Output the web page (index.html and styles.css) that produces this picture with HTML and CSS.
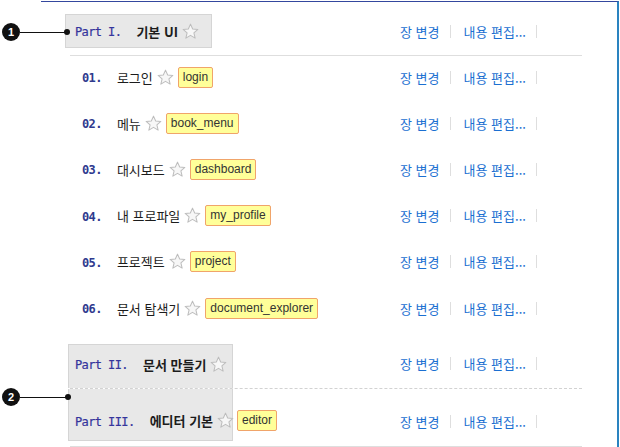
FILE: index.html
```html
<!DOCTYPE html>
<html lang="ko">
<head>
<meta charset="utf-8">
<link rel="stylesheet" href="styles.css">
</head>
<body>
<div class="callout c1"><span class="badge">1</span><span class="wire"></span><span class="dot"></span></div>
<div class="callout c2"><span class="badge">2</span><span class="wire"></span><span class="dot"></span></div>

<div class="panel">
  <div class="list">
    <div class="row part part1">
      <div class="title"><div class="cell sel1"><span class="pnum">Part I.</span><span class="ptext">기본 UI</span><svg class="star" viewBox="0 0 18 18"><polygon points="9,1.2 11.3,6.3 16.8,6.8 12.6,10.5 13.9,16 9,13.1 4.1,16 5.4,10.5 1.2,6.8 6.7,6.3"/></svg></div></div>
      <div class="actions"><a>장 변경</a><span class="sep"></span><a>내용 편집...</a><span class="sep"></span></div>
    </div>

    <div class="row chap">
      <div class="title"><span class="cnum">01.</span><span class="ctext">로그인</span><svg class="star" viewBox="0 0 18 18"><polygon points="9,1.2 11.3,6.3 16.8,6.8 12.6,10.5 13.9,16 9,13.1 4.1,16 5.4,10.5 1.2,6.8 6.7,6.3"/></svg><span class="tag">login</span></div>
      <div class="actions"><a>장 변경</a><span class="sep"></span><a>내용 편집...</a><span class="sep"></span></div>
    </div>
    <div class="row chap">
      <div class="title"><span class="cnum">02.</span><span class="ctext">메뉴</span><svg class="star" viewBox="0 0 18 18"><polygon points="9,1.2 11.3,6.3 16.8,6.8 12.6,10.5 13.9,16 9,13.1 4.1,16 5.4,10.5 1.2,6.8 6.7,6.3"/></svg><span class="tag">book_menu</span></div>
      <div class="actions"><a>장 변경</a><span class="sep"></span><a>내용 편집...</a><span class="sep"></span></div>
    </div>
    <div class="row chap">
      <div class="title"><span class="cnum">03.</span><span class="ctext">대시보드</span><svg class="star" viewBox="0 0 18 18"><polygon points="9,1.2 11.3,6.3 16.8,6.8 12.6,10.5 13.9,16 9,13.1 4.1,16 5.4,10.5 1.2,6.8 6.7,6.3"/></svg><span class="tag">dashboard</span></div>
      <div class="actions"><a>장 변경</a><span class="sep"></span><a>내용 편집...</a><span class="sep"></span></div>
    </div>
    <div class="row chap">
      <div class="title"><span class="cnum">04.</span><span class="ctext">내 프로파일</span><svg class="star" viewBox="0 0 18 18"><polygon points="9,1.2 11.3,6.3 16.8,6.8 12.6,10.5 13.9,16 9,13.1 4.1,16 5.4,10.5 1.2,6.8 6.7,6.3"/></svg><span class="tag">my_profile</span></div>
      <div class="actions"><a>장 변경</a><span class="sep"></span><a>내용 편집...</a><span class="sep"></span></div>
    </div>
    <div class="row chap">
      <div class="title"><span class="cnum">05.</span><span class="ctext">프로젝트</span><svg class="star" viewBox="0 0 18 18"><polygon points="9,1.2 11.3,6.3 16.8,6.8 12.6,10.5 13.9,16 9,13.1 4.1,16 5.4,10.5 1.2,6.8 6.7,6.3"/></svg><span class="tag">project</span></div>
      <div class="actions"><a>장 변경</a><span class="sep"></span><a>내용 편집...</a><span class="sep"></span></div>
    </div>
    <div class="row chap">
      <div class="title"><span class="cnum">06.</span><span class="ctext">문서 탐색기</span><svg class="star" viewBox="0 0 18 18"><polygon points="9,1.2 11.3,6.3 16.8,6.8 12.6,10.5 13.9,16 9,13.1 4.1,16 5.4,10.5 1.2,6.8 6.7,6.3"/></svg><span class="tag">document_explorer</span></div>
      <div class="actions"><a>장 변경</a><span class="sep"></span><a>내용 편집...</a><span class="sep"></span></div>
    </div>

    <div class="row part part2">
      <div class="title"><div class="cell sel2"><span class="pnum">Part II.</span><span class="ptext">문서 만들기</span><svg class="star" viewBox="0 0 18 18"><polygon points="9,1.2 11.3,6.3 16.8,6.8 12.6,10.5 13.9,16 9,13.1 4.1,16 5.4,10.5 1.2,6.8 6.7,6.3"/></svg></div></div>
      <div class="actions"><a>장 변경</a><span class="sep"></span><a>내용 편집...</a><span class="sep"></span></div>
    </div>
    <div class="row part part3">
      <div class="title"><div class="cell sel3"><span class="pnum">Part III.</span><span class="ptext">에디터 기본</span><svg class="star" viewBox="0 0 18 18"><polygon points="9,1.2 11.3,6.3 16.8,6.8 12.6,10.5 13.9,16 9,13.1 4.1,16 5.4,10.5 1.2,6.8 6.7,6.3"/></svg></div><span class="tag">editor</span></div>
      <div class="actions"><a>장 변경</a><span class="sep"></span><a>내용 편집...</a><span class="sep"></span></div>
    </div>
  </div>
</div>
</body>
</html>
```

FILE: styles.css
```css
* { box-sizing: border-box; }
html, body { margin: 0; padding: 0; background: #fff; }
body {
  font-family: "Noto Sans CJK KR", "Noto Sans", sans-serif;
  font-size: 13px;
  color: #222;
  width: 620px;
  height: 447px;
  overflow: hidden;
  position: relative;
}
.panel {
  margin: 1px 1px 0 41px;
  border-top: 1px solid #34479e;
  border-right: 2px solid #2a83c0;
  height: 460px;
}
.list {
  margin-left: 29px;
  width: 512px;
}
.row {
  display: flex;
  align-items: stretch;
}
.title {
  flex: 1;
  display: flex;
  align-items: center;
  min-width: 0;
  white-space: nowrap;
}
.actions {
  flex: 0 0 182px;
  display: flex;
  align-items: center;
}
.actions a {
  color: #1b6fd1;
  font-size: 13px;
  line-height: 17px;
  white-space: nowrap;
}
.sep {
  display: inline-block;
  width: 1px;
  height: 13px;
  background: #dedede;
  margin: 0 13px 0 10px;
}

/* part rows */
.pnum {
  font-family: "DejaVu Sans Mono", "Liberation Mono", monospace;
  font-size: 12px;
  letter-spacing: -0.6px;
  color: #34349c;
  margin-right: 15px;
  line-height: 16px;
  padding-top: 2px;
  -webkit-text-stroke: 0.2px #34349c;
}
.ptext {
  font-weight: bold;
  font-size: 13px;
  line-height: 17px;
  color: #1c1c1c;
}
.cell {
  display: flex;
  align-items: center;
  background: #e8e8e8;
  border: 1px solid #d5d5d5;
}
.part1 {
  padding: 12px 0 7px;
  border-bottom: 1px solid #dedede;
}
.sel1 {
  height: 34px;
  margin-left: -5px;
  padding: 0 8px 0 9px;
}
.part2 {
  padding-top: 11px;
  border-bottom: 1px dashed #d2d2d2;
}
.sel2 {
  width: 165px;
  height: 44px;
  margin-left: -2px;
  padding: 0 0 5px 6px;
  border-bottom: none;
}
.part2 .actions { padding-bottom: 5px; }
.part3 {
  padding-bottom: 5px;
  border-bottom: 1px solid #dedede;
}
.part3 .title { align-items: flex-start; }
.sel3 {
  width: 165px;
  height: 52px;
  margin-left: -2px;
  padding: 12px 0 0 6px;
  border-top: none;
}
.part3 > .title > .tag { margin-top: 21px; margin-left: 4px; }
.part3 .actions { padding-top: 12px; }

/* chapter rows */
.chap {
  height: 46.2px;
  padding-bottom: 4px;
}
.cnum {
  font-family: "DejaVu Sans Mono", "Liberation Mono", monospace;
  font-size: 12px;
  letter-spacing: -0.6px;
  font-weight: bold;
  color: #2f3a8e;
  margin-left: 12px;
  margin-right: 15px;
  line-height: 16px;
  padding-top: 2px;
}
.ctext {
  font-size: 13px;
  line-height: 17px;
  color: #1c1c1c;
}
.star {
  width: 17px;
  height: 17px;
  margin: 0 4px 0 4px;
  flex: 0 0 17px;
}
.star polygon {
  fill: #f7f7f7;
  stroke: #bdbdbd;
  stroke-width: 1.1;
  stroke-linejoin: round;
}
.tag {
  display: inline-block;
  height: 21px;
  line-height: 19px;
  padding: 0 4px;
  background: #ffff99;
  border: 1px solid #f0a46a;
  border-radius: 2px;
  font-family: "Liberation Sans", Arial, sans-serif;
  font-size: 12px;
  color: #333;
  white-space: nowrap;
}

/* callouts */
.callout {
  position: absolute;
  left: 2px;
  display: flex;
  align-items: center;
  height: 18px;
}
.c1 { top: 23px; }
.c2 { top: 388px; }
.badge {
  width: 18px;
  height: 18px;
  border-radius: 50%;
  background: #111;
  color: #fff;
  font-family: "Liberation Sans", Arial, sans-serif;
  font-weight: bold;
  font-size: 11px;
  line-height: 18px;
  text-align: center;
}
.wire {
  height: 1px;
  background: #111;
}
.c1 .wire { width: 45px; }
.c2 .wire { width: 46px; }
.dot {
  width: 6px;
  height: 6px;
  border-radius: 50%;
  background: #111;
  margin-left: -1px;
}
```
